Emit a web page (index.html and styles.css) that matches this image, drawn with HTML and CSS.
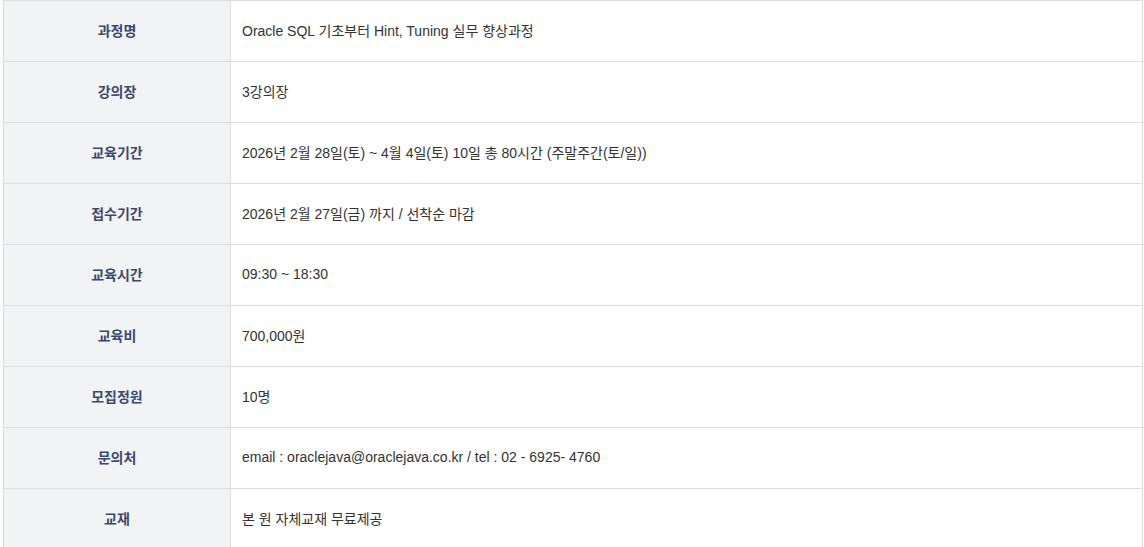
FILE: index.html
```html
<!DOCTYPE html>
<html lang="ko">
<head>
<meta charset="utf-8">
<link rel="stylesheet" href="styles.css">
</head>
<body>
<table class="info">
  <tr><th>과정명</th><td>Oracle SQL 기초부터 Hint, Tuning 실무 향상과정</td></tr>
  <tr><th>강의장</th><td>3강의장</td></tr>
  <tr><th>교육기간</th><td>2026년 2월 28일(토) ~ 4월 4일(토) 10일 총 80시간 (주말주간(토/일))</td></tr>
  <tr><th>접수기간</th><td>2026년 2월 27일(금) 까지 / 선착순 마감</td></tr>
  <tr><th>교육시간</th><td>09:30 ~ 18:30</td></tr>
  <tr><th>교육비</th><td>700,000원</td></tr>
  <tr><th>모집정원</th><td>10명</td></tr>
  <tr><th>문의처</th><td>email : oraclejava@oraclejava.co.kr / tel : 02 - 6925- 4760</td></tr>
  <tr><th>교재</th><td>본 원 자체교재 무료제공</td></tr>
</table>
</body>
</html>
```
FILE: styles.css
```css
html, body {
  margin: 0;
  padding: 0;
  background: #fff;
}
body {
  padding-left: 3px;
  font-family: "Liberation Sans", "Noto Sans CJK KR", Arial, sans-serif;
  font-size: 14px;
  color: #333;
}
.info {
  width: 1140px;
  border-collapse: collapse;
  table-layout: fixed;
}
.info th, .info td {
  border: 1px solid #dddddd;
  height: 60px;
  padding: 0 0 2px 0;
  box-sizing: border-box;
  vertical-align: middle;
}
.info tr { height: 61px; }
.info th {
  width: 227px;
  background: #f2f3f5;
  color: #3a4a6e;
  font-weight: bold;
  text-align: center;
}
.info td {
  text-align: left;
  padding-left: 11px;
}
```
